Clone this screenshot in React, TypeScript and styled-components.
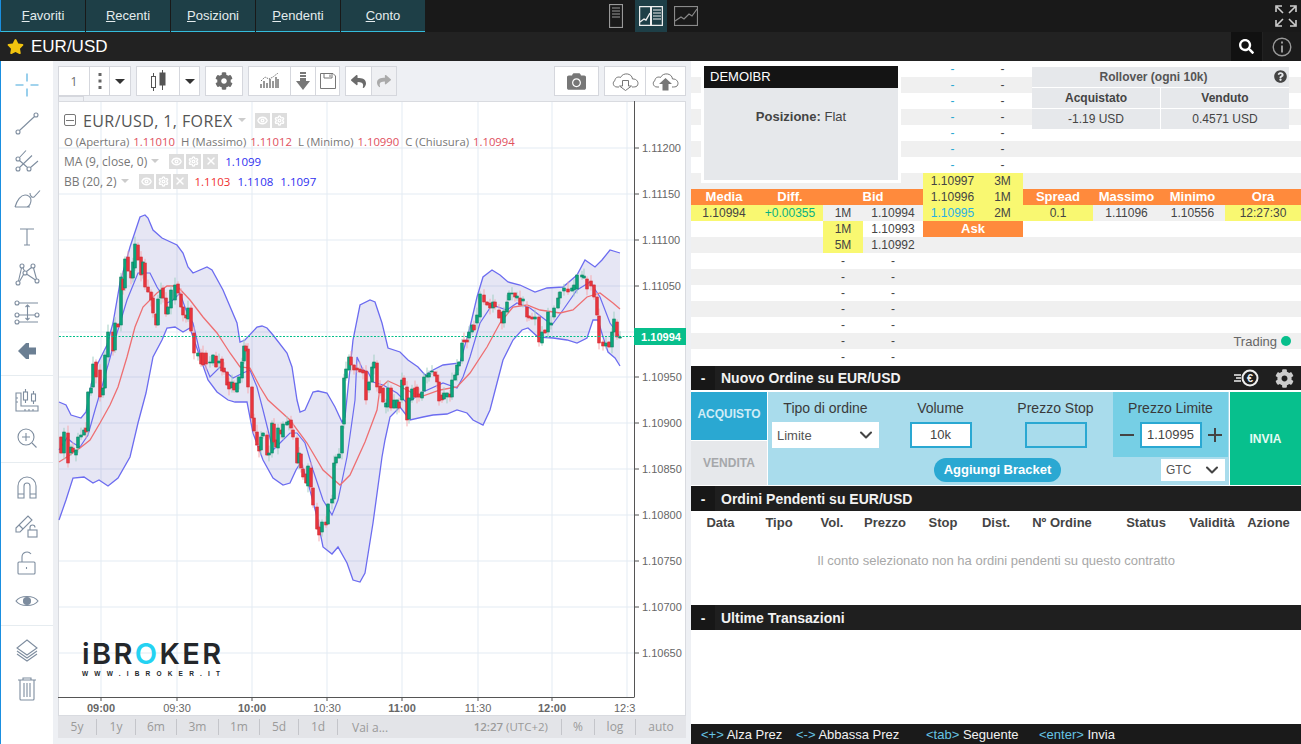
import React from "react";
import styled, { createGlobalStyle } from "styled-components";
import { ChevronDown, Eye, Settings, X } from "lucide-react";
import { FaCamera, FaCog, FaQuestionCircle, FaReply, FaSearch, FaShare, FaStar } from "react-icons/fa";

const GlobalStyle = createGlobalStyle`
  html, body {
    margin: 0;
    padding: 0;
    height: 100%;
    overflow: hidden;
    background: #fff;
    font-family: "Liberation Sans", Arial, sans-serif;
  }
  * { box-sizing: border-box; }
`;

const Page = styled.div`
  width: 1301px;
  height: 744px;
  display: flex;
  flex-direction: column;
  overflow: hidden;
`;

/* ---------- top bars ---------- */

const TopBar = styled.div`
  height: 32px;
  flex: none;
  display: flex;
  background: #191919;
  border-left: 1px solid #1a8fe0;
`;

const Tabs = styled.div`
  display: flex;
  gap: 1px;
  width: 424px;
  margin-right: 175px;
`;

const Tab = styled.div`
  flex: 1;
  display: flex;
  align-items: center;
  justify-content: center;
  background: #1e3f47;
  border-bottom: 1px solid #34bcdc;
  color: #e4ecee;
  font-size: 13px;
`;

const ViewSwitch = styled.div`
  display: flex;
  gap: 3px;
`;

const ViewButton = styled.div<{ $active?: boolean }>`
  width: 32px;
  display: flex;
  align-items: center;
  justify-content: center;
  background: ${(p) => (p.$active ? "#1e3f47" : "transparent")};
`;

const FullScreen = styled.div`
  margin-left: auto;
  margin-right: 4px;
  display: flex;
  align-items: center;
`;

const TitleBar = styled.div`
  height: 29px;
  flex: none;
  display: flex;
  align-items: center;
  background: #222;
  padding-left: 7px;
  color: #fff;
  font-size: 17px;
`;

const Title = styled.span`
  margin-left: 7px;
`;

const TitleAction = styled.div<{ $w: number; $bg: string }>`
  width: ${(p) => p.$w}px;
  height: 100%;
  display: flex;
  align-items: center;
  justify-content: center;
  background: ${(p) => p.$bg};
`;

const TitleActions = styled.div`
  margin-left: auto;
  height: 100%;
  display: flex;
  gap: 1px;
`;

/* ---------- main ---------- */

const Main = styled.div`
  flex: 1;
  display: flex;
  min-height: 0;
`;

const SideBar = styled.div`
  width: 53px;
  flex: none;
  background: #fff;
  border-left: 1px solid #1a8fe0;
`;

const SideGroup = styled.div`
  padding: 5px 0;
  border-bottom: 1px solid #e6ecf0;
  &:last-child { border-bottom: none; }
`;

const SideItem = styled.div`
  height: 38px;
  display: flex;
  align-items: center;
  justify-content: center;
  color: #7e8d9f;
  padding-right: 1px;
`;

const ChartColumn = styled.div`
  width: 638px;
  flex: none;
  background: #eef0f4;
  padding: 5px 5px 0;
  display: flex;
  flex-direction: column;
`;

const ChartToolbar = styled.div`
  height: 30px;
  flex: none;
  display: flex;
  gap: 5px;
`;

const ToolGroup = styled.div<{ $push?: boolean }>`
  display: flex;
  background: #fff;
  border: 1px solid #d5d7dd;
  margin-left: ${(p) => (p.$push ? "auto" : "0")};
`;

const ToolButton = styled.div<{ $w: number; $off?: boolean }>`
  width: ${(p) => p.$w}px;
  display: flex;
  align-items: center;
  justify-content: center;
  background: ${(p) => (p.$off ? "#eff0f3" : "#fff")};
  color: #6b6b6b;
  font-size: 12px;
  font-family: "Open Sans", sans-serif;
  & + & { border-left: 1px solid #d5d7dd; }
`;

const Caret = styled.i<{ $c?: string; $s?: number }>`
  display: inline-block;
  width: 0;
  height: 0;
  border-left: ${(p) => p.$s ?? 5}px solid transparent;
  border-right: ${(p) => p.$s ?? 5}px solid transparent;
  border-top: ${(p) => p.$s ?? 5}px solid ${(p) => p.$c ?? "#333"};
`;

const HandleRow = styled.div`
  height: 5px;
  flex: none;
`;

const Handle = styled.div`
  width: 26px;
  height: 5px;
  border: 1px solid #d5d7dd;
  border-bottom: none;
  background: #eef0f4;
`;

const ChartPanel = styled.div`
  position: relative;
  height: 615px;
  flex: none;
  background: #fff;
  box-shadow: 0 0 0 1px #d9dbe0 inset;
`;

const ChartSvg = styled.svg`
  display: block;
  width: 628px;
  height: 615px;
  font-family: "Liberation Sans", Arial, sans-serif;
`;

const Legend = styled.div`
  position: absolute;
  left: 6px;
  top: 8px;
  font-family: "Open Sans", sans-serif;
  font-size: 12px;
  color: #777;
`;

const LegendRow = styled.div<{ $h?: number; $fs?: number }>`
  height: ${(p) => p.$h ?? 20}px;
  display: flex;
  align-items: center;
  white-space: nowrap;
  font-size: ${(p) => p.$fs ?? 12}px;
`;

const LegendTitle = styled.span`
  margin: 0 5px 0 7px;
  padding-top: 1px;
  font-size: 16px;
  letter-spacing: 0.4px;
  color: #555;
`;

const Collapse = styled.span`
  width: 12px;
  height: 12px;
  border: 1px solid #777;
  border-radius: 2px;
  display: flex;
  align-items: center;
  justify-content: center;
  &::before {
    content: "";
    width: 8px;
    height: 1px;
    background: #777;
  }
`;

const LegendBtn = styled.span`
  width: 15px;
  height: 15px;
  margin-right: 2px;
  background: #ddd;
  color: #fff;
  display: flex;
  align-items: center;
  justify-content: center;
`;

const LegendVal = styled.span<{ $c: string; $ml?: number; $fs?: number }>`
  color: ${(p) => p.$c};
  margin-left: ${(p) => p.$ml ?? 4}px;
  margin-right: 2px;
  font-size: ${(p) => (p.$fs ? `${p.$fs}px` : "inherit")};
`;

const LegendLabel = styled.span<{ $ml?: number }>`
  margin-left: ${(p) => p.$ml ?? 0}px;
`;

const CaretBox = styled.span<{ $ml: number; $mr: number }>`
  display: flex;
  margin: 0 ${(p) => p.$mr}px 0 ${(p) => p.$ml}px;
`;

const Logo = styled.div`
  position: absolute;
  left: 24px;
  top: 538px;
  color: #23272b;
`;

const LogoWord = styled.div`
  font-family: "Inter", sans-serif;
  font-weight: 600;
  font-size: 29px;
  line-height: 30px;
  letter-spacing: 2.4px;
`;

const LogoO = styled.span`
  color: #24d2f2;
`;

const LogoSite = styled.div`
  font-family: "Liberation Sans", sans-serif;
  font-size: 6.5px;
  font-weight: bold;
  letter-spacing: 6.2px;
  line-height: 9px;
`;

const RangeBar = styled.div`
  height: 22px;
  flex: none;
  display: flex;
  align-items: center;
  background: #e3e4e8;
  color: #9a9a9a;
  font-size: 12px;
  font-family: "Open Sans", sans-serif;
`;

const RangeItem = styled.div<{ $w: number }>`
  width: ${(p) => p.$w}px;
  height: 16px;
  line-height: 16px;
  text-align: center;
  border-right: 1px solid #c4c5ca;
  &:last-child { border-right: none; }
`;

const RangeGoTo = styled.div`
  margin-left: 14px;
`;

const RangeTime = styled.div`
  margin-left: auto;
  padding-right: 13px;
  border-right: 1px solid #c4c5ca;
  height: 16px;
  line-height: 16px;
  font-size: 11.5px;
  b { font-weight: 600; }
`;

/* ---------- right panel ---------- */

const RightPanel = styled.div`
  flex: 1;
  min-width: 0;
  display: flex;
  flex-direction: column;
  background: #fff;
`;

const Book = styled.div`
  position: relative;
  height: 304px;
  flex: none;
`;

const BookRow = styled.div<{ $odd: boolean }>`
  height: 16px;
  display: grid;
  grid-template-columns: 66px 66px 40px 60px 59px 41px 70px 67px 65px 76px;
  background: ${(p) => (p.$odd ? "#f0f0f0" : "#fff")};
  font-size: 12px;
  color: #444;
`;

const Cell = styled.div<{ $bg?: string; $c?: string; $bold?: boolean; $col?: string }>`
  grid-column: ${(p) => p.$col ?? "auto"};
  background: ${(p) => p.$bg ?? "transparent"};
  color: ${(p) => p.$c ?? "inherit"};
  font-weight: ${(p) => (p.$bold ? "bold" : "normal")};
  font-size: ${(p) => (p.$bold ? "13px" : "12px")};
  line-height: 16px;
  text-align: center;
  white-space: nowrap;
`;

const TradingCell = styled.div`
  grid-column: 8 / 11;
  display: flex;
  align-items: center;
  justify-content: flex-end;
  padding-right: 10px;
  gap: 4px;
  font-size: 13px;
  color: #666;
`;

const Dot = styled.span`
  width: 10px;
  height: 10px;
  border-radius: 50%;
  background: #07bf8c;
`;

const AccountBox = styled.div`
  position: absolute;
  left: 10px;
  top: 2px;
  width: 200px;
  height: 120px;
  border: 3px solid #fff;
  background: #e6e8eb;
  display: flex;
  flex-direction: column;
`;

const AccountHead = styled.div`
  height: 22px;
  flex: none;
  padding-left: 6px;
  background: #141414;
  color: #fff;
  font-size: 13px;
  line-height: 22px;
`;

const AccountBody = styled.div`
  padding-top: 21px;
  text-align: center;
  font-size: 13px;
  line-height: 16px;
  color: #444;
`;

const Rollover = styled.div`
  position: absolute;
  left: 341px;
  top: 6px;
  width: 257px;
  display: grid;
  grid-template-columns: 1fr 1fr;
  gap: 1px;
  font-size: 12px;
  color: #444;
  text-align: center;
  background: #fff;
`;

const RollCell = styled.div<{ $wide?: boolean; $bold?: boolean }>`
  position: ${(p) => (p.$wide ? "relative" : "static")};
  grid-column: ${(p) => (p.$wide ? "1 / 3" : "auto")};
  height: 20px;
  line-height: 20px;
  background: #e6e8eb;
  font-weight: ${(p) => (p.$bold ? "bold" : "normal")};
`;

const RollHelp = styled.span`
  position: absolute;
  right: 2px;
  top: 3px;
  color: #444;
  display: flex;
`;

const RollTitle = styled.span`
  margin-right: 14px;
  font-weight: bold;
  color: #555;
`;

const SectionHead = styled.div<{ $h: number; $mt?: number; $mb?: number }>`
  height: ${(p) => p.$h}px;
  flex: none;
  margin-top: ${(p) => p.$mt ?? 0}px;
  margin-bottom: ${(p) => p.$mb ?? 0}px;
  display: flex;
  align-items: center;
  background: #1f1f1f;
  color: #f2f2f2;
  font-size: 14px;
  font-weight: bold;
`;

const SectionDash = styled.span`
  width: 24px;
  height: 100%;
  display: flex;
  align-items: center;
  justify-content: center;
  background: #171717;
  margin-right: 6px;
`;

const SectionTools = styled.div`
  margin-left: auto;
  display: flex;
  align-items: center;
  gap: 16px;
  padding-right: 7px;
  color: #ccc;
`;

const OrderForm = styled.div`
  height: 93px;
  flex: none;
  display: flex;
`;

const SideTabs = styled.div`
  width: 77px;
  flex: none;
  display: flex;
  flex-direction: column;
  gap: 1px;
  border-right: 1px solid #fff;
`;

const SideTab = styled.div<{ $active?: boolean }>`
  flex: 1;
  display: flex;
  align-items: center;
  justify-content: center;
  padding-bottom: ${(p) => (p.$active ? "4px" : "0")};
  font-size: 12px;
  font-weight: bold;
  background: ${(p) => (p.$active ? "#2aa8d2" : "#e6e8eb")};
  color: ${(p) => (p.$active ? "#cfecf6" : "#a5a7aa")};
`;

const FormBody = styled.div`
  width: 461px;
  flex: none;
  background: #a9dcec;
  display: flex;
  flex-direction: column;
`;

const FormFields = styled.div`
  height: 65px;
  flex: none;
  display: flex;
`;

const Field = styled.div<{ $dark?: boolean }>`
  width: 115px;
  flex: none;
  padding-top: 8px;
  display: flex;
  flex-direction: column;
  align-items: center;
  background: ${(p) => (p.$dark ? "#76cfe5" : "transparent")};
`;

const FieldLabel = styled.div`
  height: 16px;
  line-height: 16px;
  font-size: 14px;
  color: #3a3a3a;
  margin-bottom: 6px;
  white-space: nowrap;
`;

const SelectBox = styled.div<{ $w: number; $h: number; $fs?: number }>`
  width: ${(p) => p.$w}px;
  height: ${(p) => p.$h}px;
  background: #fff;
  display: flex;
  align-items: center;
  justify-content: space-between;
  padding: 0 3px 0 5px;
  font-size: ${(p) => p.$fs ?? 12}px;
  color: #555;
`;

const InputBox = styled.div<{ $empty?: boolean }>`
  width: 62px;
  height: 26px;
  border: 2px solid #2aa8d2;
  background: ${(p) => (p.$empty ? "transparent" : "#fff")};
  font-size: 13px;
  line-height: 22px;
  text-align: center;
  color: #444;
`;

const Stepper = styled.div`
  display: flex;
  align-items: center;
  gap: 6px;
`;

const StepSign = styled.span`
  width: 14px;
  height: 14px;
  position: relative;
  &::before {
    content: "";
    position: absolute;
    left: 0;
    right: 0;
    top: 6px;
    height: 2px;
    background: #444;
  }
`;

const PlusSign = styled(StepSign)`
  &::after {
    content: "";
    position: absolute;
    top: 0;
    bottom: 0;
    left: 6px;
    width: 2px;
    background: #444;
  }
`;

const FormBottom = styled.div`
  flex: 1;
  display: flex;
  align-items: center;
  padding: 0 4px 2px 166px;
  justify-content: space-between;
`;

const BracketPill = styled.div`
  width: 127px;
  height: 24px;
  border-radius: 12px;
  background: #2aa8d2;
  color: #fff;
  font-size: 13px;
  font-weight: bold;
  line-height: 24px;
  text-align: center;
`;

const SendButton = styled.div`
  flex: 1;
  margin-left: 1px;
  background: #07c08d;
  color: #e6fbf4;
  font-size: 12px;
  font-weight: bold;
  display: flex;
  align-items: center;
  justify-content: center;
`;

const PendingBody = styled.div`
  height: 94px;
  flex: none;
`;

const PendingHead = styled.div`
  height: 22px;
  display: grid;
  grid-template-columns: 59px 58px 48px 58px 58px 48px 84px 84px 48px 65px;
  align-items: center;
  font-size: 13px;
  font-weight: bold;
  color: #444;
  text-align: center;
  white-space: nowrap;
`;

const EmptyNote = styled.div`
  margin-top: 20px;
  text-align: center;
  font-size: 13px;
  line-height: 16px;
  color: #a8a8a8;
`;

const Spacer = styled.div`
  flex: 1;
`;

const KeysBar = styled.div`
  height: 20px;
  flex: none;
  display: flex;
  align-items: center;
  padding-left: 10px;
  background: #1a1a1a;
  color: #f2f2f2;
  font-size: 13px;
`;

const KeyItem = styled.span<{ $w: number }>`
  width: ${(p) => p.$w}px;
  flex: none;
  white-space: nowrap;
`;

const Key = styled.span`
  color: #66c3e4;
`;

/* ---------- chart data, all in page pixels ---------- */

const CANDLES =
  "61 437 453 r,64 432 453 g,68 433 463 r,71 447 453 g,73 448 452 r,76 450 455 g,78 437 448 g,81 435 437 g,84 430 435 g,86 428 432 r,88 392 431 g,91 388 393 g,93 364 387 g,96 362 377 r,100 370 397 r,103 388 395 g,105 355 388 g,108 332 357 g,113 332 351 r,115 323 350 g,118 324 327 r,121 277 325 g,123 279 290 r,125 259 288 g,128 257 271 r,131 271 278 r,133 262 278 g,135 244 268 g,138 245 260 r,141 257 275 r,143 262 274 g,145 263 287 r,148 287 292 r,151 292 300 r,153 298 313 r,156 314 325 r,158 299 325 g,161 290 298 g,163 288 298 r,166 298 314 r,168 307 314 g,171 290 308 g,175 285 300 g,178 284 293 r,181 294 307 r,183 307 315 r,186 315 318 r,188 308 319 g,191 308 331 r,194 333 353 r,198 353 356 g,201 353 364 r,203 353 365 r,206 353 364 r,210 362 363 g,213 355 363 g,216 356 367 r,219 361 363 g,222 359 371 r,224 368 372 r,227 372 385 r,229 382 389 r,232 382 388 g,234 383 390 r,237 383 392 g,239 377 383 g,242 362 378 g,244 346 361 g,246 346 351 r,248 349 387 r,252 387 418 r,254 418 431 r,257 432 445 r,259 446 451 r,261 437 450 g,263 433 436 g,267 435 455 r,269 453 455 g,272 423 453 g,274 424 442 r,276 440 447 r,278 428 448 g,281 430 434 r,283 424 437 g,287 422 425 g,289 421 424 g,291 420 428 r,293 430 437 r,297 438 463 r,299 453 463 g,301 454 468 r,303 469 477 r,306 474 483 r,308 466 486 g,311 468 487 r,313 488 505 r,317 507 529 r,319 527 535 r,322 522 532 g,326 522 525 r,328 504 524 g,332 499 503 g,334 463 499 g,336 457 463 g,339 454 458 g,342 426 453 g,344 378 424 g,346 369 378 g,349 357 370 g,351 357 365 r,354 365 370 r,357 368 370 r,360 369 372 r,363 370 373 r,366 371 400 r,369 382 390 g,372 367 382 g,374 362 368 g,377 363 387 r,380 386 393 r,383 388 402 r,386 403 407 g,388 388 407 g,391 388 408 r,394 400 408 g,397 400 408 g,399 402 408 r,402 380 400 g,404 378 385 r,407 387 420 r,409 398 419 g,412 389 400 g,415 388 397 r,417 387 397 r,419 394 397 r,422 392 398 g,424 377 391 g,427 375 377 g,429 373 377 g,432 371 372 g,435 372 376 r,437 375 382 r,439 382 401 r,442 395 400 r,444 393 399 g,447 393 397 g,450 394 397 r,452 380 397 g,455 375 380 g,457 365 375 g,459 362 366 g,462 343 361 g,464 340 342 r,467 340 342 r,469 332 338 g,472 325 332 g,474 325 330 r,477 315 323 g,480 294 317 g,484 295 302 r,487 302 305 r,490 303 308 r,493 302 308 g,495 302 307 r,499 310 318 r,502 312 323 r,504 311 323 g,507 302 312 g,509 293 300 g,512 293 294 g,515 293 297 r,517 296 298 g,520 298 305 r,523 299 301 g,527 307 317 r,529 316 318 r,532 317 319 r,535 317 319 g,539 317 342 r,542 332 343 g,545 330 333 r,548 312 332 g,551 323 325 g,554 308 317 g,558 298 308 g,560 292 298 g,564 288 291 g,568 289 292 r,572 288 291 g,574 285 290 g,577 275 289 g,582 275 277 g,584 276 278 g,587 279 289 r,591 281 286 r,594 285 297 r,597 297 315 r,599 316 343 r,603 342 346 r,606 343 346 g,609 342 347 r,612 332 347 g,614 319 332 g,617 322 337 r,620 337 338 g";

const UPPER = [
  [59, 402], [66, 405], [71, 415], [81, 418], [86, 412], [91, 385], [97, 365], [107, 345], [113, 323], [120, 283], [130, 247], [140, 217],
  [145, 215], [148, 218], [153, 230], [162, 238], [177, 245], [183, 253], [188, 267], [193, 273], [207, 267], [212, 270], [223, 290],
  [237, 323], [240, 342], [245, 340], [257, 327], [262, 326], [267, 328], [273, 335], [287, 353], [292, 367], [297, 400], [300, 412],
  [305, 410], [313, 392], [318, 391], [327, 393], [335, 407], [342, 422], [345, 417], [353, 340], [360, 305], [370, 300], [375, 302],
  [382, 323], [388, 348], [400, 352], [408, 360], [418, 367], [425, 375], [433, 370], [443, 365], [460, 363], [470, 327], [477, 297],
  [483, 277], [492, 270], [500, 275], [508, 282], [520, 285], [535, 292], [547, 288], [563, 287], [577, 275], [585, 260], [595, 267],
  [602, 260], [610, 250], [620, 253],
];

const LOWER = [
  [59, 520], [66, 500], [73, 478], [84, 477], [93, 483], [99, 480], [108, 486], [118, 478], [130, 457], [138, 423], [146, 393], [153, 357],
  [162, 340], [167, 328], [175, 327], [183, 332], [190, 328], [193, 337], [200, 357], [208, 380], [217, 392], [228, 400], [235, 402],
  [247, 402], [253, 433], [263, 460], [273, 478], [283, 485], [290, 483], [296, 470], [301, 462], [310, 490], [317, 517], [323, 547],
  [332, 554], [338, 547], [347, 563], [353, 580], [360, 582], [365, 573], [373, 523], [382, 457], [385, 440], [390, 417], [400, 407],
  [410, 420], [423, 417], [433, 415], [447, 414], [457, 410], [467, 413], [473, 420], [483, 425], [490, 410], [497, 383], [503, 360],
  [513, 340], [522, 330], [528, 328], [538, 337], [553, 338], [567, 340], [577, 343], [587, 338], [593, 320], [598, 320], [603, 337],
  [608, 352], [615, 358], [620, 366],
];

const BASIS = [
  [59, 462], [70, 455], [80, 448], [90, 440], [100, 423], [110, 405], [118, 387], [127, 357], [135, 327], [143, 307], [157, 293], [167, 286],
  [177, 286], [190, 300], [203, 317], [217, 333], [230, 353], [240, 367], [250, 368], [260, 387], [268, 400], [290, 420], [307, 443],
  [323, 470], [340, 485], [350, 475], [365, 442], [377, 410], [380, 388], [388, 381], [397, 385], [407, 390], [420, 397], [440, 390],
  [457, 387], [470, 373], [487, 347], [500, 323], [513, 307], [527, 305], [540, 310], [560, 313], [573, 310], [587, 297], [600, 293],
  [613, 303], [620, 309],
];

const AVERAGE = [
  [59, 450], [67, 438], [73, 443], [80, 447], [88, 435], [95, 410], [103, 383], [117, 333], [127, 300], [138, 273], [150, 273], [157, 287],
  [167, 303], [173, 300], [180, 293], [187, 313], [193, 323], [200, 353], [210, 377], [220, 367], [233, 378], [243, 373], [250, 370],
  [257, 387], [263, 410], [268, 430], [273, 450], [280, 443], [290, 433], [297, 433], [305, 443], [313, 470], [323, 500], [332, 515],
  [338, 500], [347, 457], [355, 400], [357, 357], [363, 370], [368, 372], [373, 382], [383, 385], [397, 393], [407, 403], [423, 392],
  [443, 383], [457, 388], [463, 377], [470, 357], [480, 323], [492, 305], [507, 310], [517, 303], [530, 308], [543, 318], [552, 325],
  [563, 310], [577, 290], [590, 282], [600, 297], [610, 323], [620, 337],
];

const toPoints = (pts: number[][]) => pts.map((p) => p.join(",")).join(" ");

const PRICE_LABELS = [
  ["1.11200", 148], ["1.11150", 194], ["1.11100", 240], ["1.11050", 286], ["1.11000", 332], ["1.10950", 377],
  ["1.10900", 423], ["1.10850", 469], ["1.10800", 515], ["1.10750", 561], ["1.10700", 607], ["1.10650", 653],
] as const;

const TIME_LABELS = [
  ["09:00", 101], ["09:30", 177], ["10:00", 252], ["10:30", 327], ["11:00", 402], ["11:30", 478], ["12:00", 552],
] as const;

const GRID = "#e3ebf3";
const BAND = "#6c6cf0";

const Chart = () => {
  const candles = CANDLES.split(",").map((row, i) => {
    const [x, top, bottom, side] = row.split(" ");
    return { x: Number(x), top: Number(top), bottom: Number(bottom), up: side === "g", i };
  });

  return (
    <ChartSvg viewBox="58 101 628 615">
      {PRICE_LABELS.map(([, y]) => (
        <line key={y} x1="59" x2="634" y1={y} y2={y} stroke={GRID} />
      ))}
      {TIME_LABELS.map(([, x]) => (
        <line key={x} x1={x} x2={x} y1="102" y2="697" stroke={GRID} />
      ))}
      <line x1="627" x2="627" y1="102" y2="697" stroke={GRID} />

      <polygon points={toPoints([...UPPER, ...[...LOWER].reverse()])} fill="rgba(105,105,190,0.17)" />
      <polyline points={toPoints(AVERAGE)} fill="none" stroke={BAND} strokeWidth="1.2" />
      <polyline points={toPoints(BASIS)} fill="none" stroke="#ee6f72" strokeWidth="1.3" />
      <polyline points={toPoints(UPPER)} fill="none" stroke={BAND} strokeWidth="1.3" />
      <polyline points={toPoints(LOWER)} fill="none" stroke={BAND} strokeWidth="1.3" />

      {candles.map((c) => (
        <line
          key={`w${c.i}`}
          x1={c.x}
          x2={c.x}
          y1={c.top - ((c.i * 7) % 5) * 1.6 - 1}
          y2={c.bottom + ((c.i * 3) % 4) * 1.8 + 1}
          stroke={c.up ? "#a3cfc4" : "#f5aab0"}
        />
      ))}
      {candles.map((c) => (
        <rect
          key={`b${c.i}`}
          x={c.x - 1.3}
          y={c.top}
          width="2.6"
          height={Math.max(c.bottom - c.top, 1)}
          fill={c.up ? "#0aa57b" : "#e8343c"}
          stroke={c.up ? "#0a7f61" : "#cc2f37"}
          strokeWidth="0.6"
        />
      ))}

      <line x1="59" x2="634" y1="336.5" y2="336.5" stroke="#00bf8a" strokeDasharray="2 1.5" />

      <line x1="634.5" x2="634.5" y1="101" y2="697" stroke="#555" />
      <line x1="58" x2="634.5" y1="697.5" y2="697.5" stroke="#555" />

      {PRICE_LABELS.map(([label, y]) => (
        <g key={label}>
          <line x1="635" x2="639" y1={y} y2={y} stroke="#555" />
          <text x="642" y={y + 4} fontSize="11" fill="#666">
            {label}
          </text>
        </g>
      ))}
      {TIME_LABELS.map(([label, x]) => (
        <g key={label}>
          <line x1={x} x2={x} y1="697" y2="701" stroke="#555" />
          <text x={x} y="712" fontSize="11" fill="#666" textAnchor="middle" fontWeight={label.endsWith("00") ? "bold" : "normal"}>
            {label}
          </text>
        </g>
      ))}
      <text x="614" y="712" fontSize="11" fill="#666">
        12:3
      </text>

      <rect x="634" y="328" width="52" height="17" fill="#07bf8c" />
      <text x="661" y="341" fontSize="11" fontWeight="bold" fill="#fff" textAnchor="middle">
        1.10994
      </text>
    </ChartSvg>
  );
};

/* ---------- icons ---------- */

const Line = styled.svg`
  display: block;
  fill: none;
  stroke: currentColor;
  stroke-width: 1.1;
`;

const Tool = ({ children }: { children: React.ReactNode }) => (
  <Line width="28" height="28" viewBox="0 0 28 28">
    {children}
  </Line>
);

const SideIcons: React.ReactNode[][] = [
  [
    <Line key="cross" width="28" height="28" viewBox="0 0 28 28" style={{ color: "#45a8dc" }}>
      <path d="M14 2.5v8M14 17.5v8M2.5 14h8M17.5 14h8" />
    </Line>,
    <Tool key="line">
      <circle cx="5" cy="23" r="2" />
      <circle cx="23" cy="6" r="2" />
      <path d="M6.5 21.5L21.5 7.5" />
    </Tool>,
    <Tool key="fork">
      <circle cx="5" cy="12" r="2" />
      <circle cx="5" cy="22" r="2" />
      <circle cx="16" cy="22" r="2" />
      <path d="M6.5 10.5L13 3.5M6.5 20.5L19 8.5M17.5 20.5L25 14M6.5 13.5L14.5 20.5" />
    </Tool>,
    <Tool key="brush">
      <path d="M2 22h15M2 22C4 15 8 10 12 10C15 10 18 12 18 15C18 18 17 20.5 14 22" />
      <path d="M17 8C17 11 19 13 21 12L27 5.5" />
    </Tool>,
    <Tool key="text">
      <path d="M7 6h14M14 6v16M11 22h6" />
    </Tool>,
    <Tool key="nodes">
      <circle cx="5" cy="22" r="2" />
      <circle cx="9" cy="5" r="2" />
      <circle cx="12" cy="12" r="2" />
      <circle cx="20" cy="5" r="2" />
      <circle cx="24" cy="20" r="2" />
      <path d="M5.5 20L8.5 7M10 7L11.5 10M13.5 10.5L18.5 6.5M20.5 7L23.5 18M6.5 20.5L10.5 13.5M13.5 13L22.5 19" />
    </Tool>,
    <Tool key="levels">
      <circle cx="4" cy="4" r="2" />
      <circle cx="4" cy="16" r="2" />
      <circle cx="4" cy="23" r="2" />
      <circle cx="24" cy="16" r="2" />
      <path d="M6 4h19M6 16h16M6 23h19M14.5 6v15M12.5 8l2-2 2 2M12.5 19l2 2 2-2" />
    </Tool>,
    <svg key="back" width="18" height="16" viewBox="0 0 18 16" fill="#6b7f93">
      <path d="M0 8L8 0H11V4.5H18V11.5H11V16H8Z" />
    </svg>,
  ],
  [
    <Tool key="ruler">
      <path d="M3 7V25H25V20H8V7Z" />
      <path d="M12 25v-2M16 25v-2M20 25v-2M3 16h2M3 12h2" />
      <rect x="10.5" y="6" width="4" height="8" />
      <path d="M12.5 3v3M12.5 14v3" />
      <rect x="18.5" y="8" width="4" height="7" />
      <path d="M20.5 5v3M20.5 15v3" />
    </Tool>,
    <Tool key="zoom">
      <circle cx="13" cy="13" r="8" />
      <path d="M19 19l4.5 4.5M13 9v8M9 13h8" />
    </Tool>,
  ],
  [
    <Tool key="magnet">
      <path d="M5 25V13a9 9 0 0 1 18 0V25H17V13a3 3 0 0 0-6 0V25ZM5 21h6M17 21h6" />
    </Tool>,
    <Tool key="pencil">
      <path d="M3 17L15 5L19 9L7 21L3 21Z" />
      <path d="M6 14L10 18" />
      <rect x="15" y="19" width="9" height="7" />
      <path d="M17 19v-2.5a2.5 2.5 0 0 1 5 0" />
    </Tool>,
    <Tool key="lock">
      <rect x="5" y="13" width="17" height="12" rx="1" />
      <path d="M9 13V8a5 5 0 0 1 9-3" />
      <path d="M13.5 18v2" />
    </Tool>,
    <Tool key="eye">
      <path d="M3 14C7 8 21 8 25 14C21 20 7 20 3 14Z" />
      <circle cx="14" cy="14" r="3.5" fill="currentColor" />
    </Tool>,
  ],
  [
    <Tool key="layers">
      <path d="M14 4L24 12L14 19L4 12Z" />
      <path d="M4 15L14 22L24 15M4 18L14 25L24 18" />
    </Tool>,
    <Tool key="trash">
      <path d="M5 6h18M10 6V4h8v2M7 6v19a1 1 0 0 0 1 1h12a1 1 0 0 0 1-1V6M11 9v14M14 9v14M17 9v14" />
    </Tool>,
  ],
];

const BookIcon = () => (
  <svg width="14" height="24" viewBox="0 0 14 24" fill="none" stroke="#999">
    <rect x="0.5" y="0.5" width="13" height="23" strokeWidth="1.2" />
    <path d="M3 4h8M3 7h8M3 10h8M3 13h8" />
  </svg>
);

const SplitIcon = () => (
  <svg width="24" height="20" viewBox="0 0 24 20" fill="none" stroke="#eee">
    <rect x="0.5" y="0.5" width="23" height="19" strokeWidth="1.5" />
    <path d="M12 0v20" strokeWidth="2" />
    <path d="M1 16l4-3 2 1 4-7" strokeWidth="1.4" />
    <path d="M14 4h8M14 7h8M14 10h8M14 13h8" />
  </svg>
);

const LineChartIcon = () => (
  <svg width="24" height="20" viewBox="0 0 24 20" fill="none" stroke="#8a8a8a">
    <rect x="0.5" y="0.5" width="23" height="19" strokeWidth="1.2" />
    <path d="M1 15l6-4 3 2 5-5 3 2 5-7" strokeWidth="1.2" />
  </svg>
);

const FullScreenIcon = () => (
  <svg width="22" height="22" viewBox="0 0 22 22" fill="none" stroke="#ccc" strokeWidth="1.6">
    <path d="M1 7V1h6M2 2l6 6M21 7V1h-6M20 2l-6 6M1 15v6h6M2 20l6-6M21 15v6h-6M20 20l-6-6" />
  </svg>
);

const InfoIcon = () => (
  <svg width="20" height="20" viewBox="0 0 20 20" fill="none" stroke="#999" strokeWidth="1.4">
    <circle cx="10" cy="10" r="8.8" />
    <path d="M10 8.5v7M10 4.5v2" strokeWidth="2" />
  </svg>
);

const CandleIcon = () => (
  <svg width="16" height="26" viewBox="0 0 16 26" fill="none" stroke="#555">
    <rect x="1.5" y="8.5" width="4" height="11" />
    <path d="M3.5 5v3M3.5 20v3" />
    <rect x="10" y="5" width="5" height="12" fill="#555" />
    <path d="M12.5 2v3M12.5 17v5" />
  </svg>
);

const DotsIcon = () => (
  <svg width="4" height="16" viewBox="0 0 4 16" fill="#666">
    <rect width="3" height="3" x="0.5" y="0" />
    <rect width="3" height="3" x="0.5" y="6.5" />
    <rect width="3" height="3" x="0.5" y="13" />
  </svg>
);

const BarsIcon = () => (
  <svg width="19" height="16" viewBox="0 0 19 16" fill="none" stroke="#777">
    <path d="M1 15v-4M4 15v-7M7 15v-5M10 15V6M13 15V8M16 15V4M18 15V6" strokeWidth="1.5" />
    <path d="M1 8l4-4 4 2 4-2 5-4" strokeDasharray="1.5 1" />
  </svg>
);

const LoadIcon = () => (
  <svg width="14" height="18" viewBox="0 0 14 18" fill="#777">
    <path d="M4 0h6v2H4zM4 3h6v2H4zM4 6h6v3h4L7 18L0 9h4z" />
  </svg>
);

const SaveIcon = () => (
  <svg width="16" height="16" viewBox="0 0 16 16" fill="none" stroke="#777">
    <path d="M0.5 0.5H13L15.5 3V15.5H0.5Z" />
    <path d="M4 .5V5H12V.5M10 1.5V4" />
  </svg>
);

const CloudIcon = ({ up }: { up?: boolean }) => (
  <svg width="27" height="19" viewBox="0 0 27 19" fill="none" stroke="#777">
    <path d="M7 15H5C1 15 0 10 3 8.5C3 5 7 4.5 8.5 5.5C11 0 20 1 20.5 7C25 6.5 27.5 11 25 14C24 15 22 15 20 15" />
    {up ? <path d="M13.5 6L20 12H16.5V18.5H10.5V12H7Z" fill="#777" stroke="none" /> : <path d="M10.5 8.5H16.5V14H19.5L13.5 18.5L7.5 14H10.5Z" fill="#fff" />}
  </svg>
);

const EuroSpeedIcon = () => (
  <svg width="25" height="18" viewBox="0 0 25 18" fill="none" stroke="#eee">
    <circle cx="16" cy="9" r="7.5" strokeWidth="2" />
    <path d="M0 6h7M2 9h5M0 12h7" strokeWidth="1.6" />
    <text x="16" y="13" fontSize="11" fontWeight="bold" textAnchor="middle" fill="#eee" stroke="none">
      €
    </text>
  </svg>
);

/* ---------- right side data ---------- */

const YELLOW = "#f9f871";
const ORANGE = "#ff8a3c";

const BookRows = () => {
  const rows: React.ReactNode[] = [];

  for (let i = 0; i < 19; i++) {
    let cells: React.ReactNode = null;
    if (i < 7) {
      cells = (
        <>
          <Cell $col="5" $c="#2aa8d2">-</Cell>
          <Cell $col="6">-</Cell>
        </>
      );
    } else if (i === 7) {
      cells = (
        <>
          <Cell $col="5" $bg={YELLOW}>1.10997</Cell>
          <Cell $col="6" $bg={YELLOW}>3M</Cell>
        </>
      );
    } else if (i === 8) {
      cells = (
        <>
          <Cell $bg={ORANGE} $c="#fff" $bold>Media</Cell>
          <Cell $bg={ORANGE} $c="#fff" $bold>Diff.</Cell>
          <Cell $col="3 / 5" $bg={ORANGE} $c="#fff" $bold>Bid</Cell>
          <Cell $bg={YELLOW}>1.10996</Cell>
          <Cell $bg={YELLOW}>1M</Cell>
          <Cell $bg={ORANGE} $c="#fff" $bold>Spread</Cell>
          <Cell $bg={ORANGE} $c="#fff" $bold>Massimo</Cell>
          <Cell $bg={ORANGE} $c="#fff" $bold>Minimo</Cell>
          <Cell $bg={ORANGE} $c="#fff" $bold>Ora</Cell>
        </>
      );
    } else if (i === 9) {
      cells = (
        <>
          <Cell $bg={YELLOW}>1.10994</Cell>
          <Cell $bg={YELLOW} $c="#07b083">+0.00355</Cell>
          <Cell>1M</Cell>
          <Cell>1.10994</Cell>
          <Cell $bg={YELLOW} $c="#2ab0e5">1.10995</Cell>
          <Cell $bg={YELLOW}>2M</Cell>
          <Cell $bg={YELLOW}>0.1</Cell>
          <Cell>1.11096</Cell>
          <Cell>1.10556</Cell>
          <Cell $bg={YELLOW}>12:27:30</Cell>
        </>
      );
    } else if (i === 10) {
      cells = (
        <>
          <Cell $col="3" $bg={YELLOW}>1M</Cell>
          <Cell>1.10993</Cell>
          <Cell $col="5 / 7" $bg={ORANGE} $c="#fff" $bold>Ask</Cell>
        </>
      );
    } else if (i === 11) {
      cells = (
        <>
          <Cell $col="3" $bg={YELLOW}>5M</Cell>
          <Cell>1.10992</Cell>
        </>
      );
    } else {
      cells = (
        <>
          <Cell $col="3">-</Cell>
          <Cell>-</Cell>
          {i === 17 && (
            <TradingCell>
              Trading <Dot />
            </TradingCell>
          )}
        </>
      );
    }
    rows.push(
      <BookRow key={i} $odd={i % 2 === 1}>
        {cells}
      </BookRow>
    );
  }

  return <>{rows}</>;
};

const Section = ({ title, h, mt, mb, children }: { title: string; h: number; mt?: number; mb?: number; children?: React.ReactNode }) => (
  <SectionHead $h={h} $mt={mt} $mb={mb}>
    <SectionDash>-</SectionDash>
    {title}
    {children && <SectionTools>{children}</SectionTools>}
  </SectionHead>
);

const PENDING_COLUMNS = ["Data", "Tipo", "Vol.", "Prezzo", "Stop", "Dist.", "Nº Ordine", "Status", "Validità", "Azione"];

const App = () => {
  return (
    <Page>
      <GlobalStyle />
      <TopBar>
        <Tabs>
          {["Favoriti", "Recenti", "Posizioni", "Pendenti", "Conto"].map((name) => (
            <Tab key={name}>
              <span>
                <u>{name[0]}</u>
                {name.slice(1)}
              </span>
            </Tab>
          ))}
        </Tabs>
        <ViewSwitch>
          <ViewButton><BookIcon /></ViewButton>
          <ViewButton $active><SplitIcon /></ViewButton>
          <ViewButton><LineChartIcon /></ViewButton>
        </ViewSwitch>
        <FullScreen><FullScreenIcon /></FullScreen>
      </TopBar>

      <TitleBar>
        <FaStar size={17} color="#f2c40f" />
        <Title>EUR/USD</Title>
        <TitleActions>
          <TitleAction $w={31} $bg="#111"><FaSearch size={15} color="#fff" /></TitleAction>
          <TitleAction $w={38} $bg="#1b1b1b"><InfoIcon /></TitleAction>
        </TitleActions>
      </TitleBar>

      <Main>
        <SideBar>
          {SideIcons.map((group, g) => (
            <SideGroup key={g}>
              {group.map((icon, i) => (
                <SideItem key={i}>{icon}</SideItem>
              ))}
            </SideGroup>
          ))}
        </SideBar>

        <ChartColumn>
          <ChartToolbar>
            <ToolGroup>
              <ToolButton $w={30}>1</ToolButton>
              <ToolButton $w={20}><DotsIcon /></ToolButton>
              <ToolButton $w={21}><Caret /></ToolButton>
            </ToolGroup>
            <ToolGroup>
              <ToolButton $w={42}><CandleIcon /></ToolButton>
              <ToolButton $w={20}><Caret /></ToolButton>
            </ToolGroup>
            <ToolGroup>
              <ToolButton $w={36}><FaCog size={18} /></ToolButton>
            </ToolGroup>
            <ToolGroup>
              <ToolButton $w={41}><BarsIcon /></ToolButton>
              <ToolButton $w={25}><LoadIcon /></ToolButton>
              <ToolButton $w={24}><SaveIcon /></ToolButton>
            </ToolGroup>
            <ToolGroup>
              <ToolButton $w={25}><FaReply size={15} /></ToolButton>
              <ToolButton $w={25} $off><FaShare size={14} color="#aaa" /></ToolButton>
            </ToolGroup>
            <ToolGroup $push>
              <ToolButton $w={43}><FaCamera size={19} color="#777" /></ToolButton>
            </ToolGroup>
            <ToolGroup>
              <ToolButton $w={40}><CloudIcon /></ToolButton>
              <ToolButton $w={40}><CloudIcon up /></ToolButton>
            </ToolGroup>
          </ChartToolbar>
          <HandleRow><Handle /></HandleRow>

          <ChartPanel>
            <Chart />
            <Legend>
              <LegendRow $h={22}>
                <Collapse />
                <LegendTitle>EUR/USD, 1, FOREX</LegendTitle>
                <CaretBox $ml={0} $mr={9}><Caret $c="#ccc" $s={4} /></CaretBox>
                <LegendBtn><Eye size={11} strokeWidth={3} /></LegendBtn>
                <LegendBtn><Settings size={11} strokeWidth={3} /></LegendBtn>
              </LegendRow>
              <LegendRow $fs={11.3}>
                <LegendLabel>O (Apertura)</LegendLabel>
                <LegendVal $c="#e0505e">1.11010</LegendVal>
                <LegendLabel $ml={4}>H (Massimo)</LegendLabel>
                <LegendVal $c="#e0505e">1.11012</LegendVal>
                <LegendLabel $ml={4}>L (Minimo)</LegendLabel>
                <LegendVal $c="#e0505e">1.10990</LegendVal>
                <LegendLabel $ml={4}>C (Chiusura)</LegendLabel>
                <LegendVal $c="#e0505e">1.10994</LegendVal>
              </LegendRow>
              <LegendRow>
                <LegendLabel>MA (9, close, 0)</LegendLabel>
                <CaretBox $ml={4} $mr={10}><Caret $c="#ccc" $s={4} /></CaretBox>
                <LegendBtn><Eye size={11} strokeWidth={3} /></LegendBtn>
                <LegendBtn><Settings size={11} strokeWidth={3} /></LegendBtn>
                <LegendBtn><X size={12} strokeWidth={3} /></LegendBtn>
                <LegendVal $c="#2f2ff0" $ml={5} $fs={11.5}>1.1099</LegendVal>
              </LegendRow>
              <LegendRow>
                <LegendLabel>BB (20, 2)</LegendLabel>
                <CaretBox $ml={4} $mr={10}><Caret $c="#ccc" $s={4} /></CaretBox>
                <LegendBtn><Eye size={11} strokeWidth={3} /></LegendBtn>
                <LegendBtn><Settings size={11} strokeWidth={3} /></LegendBtn>
                <LegendBtn><X size={12} strokeWidth={3} /></LegendBtn>
                <LegendVal $c="#f03030" $ml={5} $fs={11.5}>1.1103</LegendVal>
                <LegendVal $c="#2f2ff0" $ml={5} $fs={11.5}>1.1108</LegendVal>
                <LegendVal $c="#2f2ff0" $ml={5} $fs={11.5}>1.1097</LegendVal>
              </LegendRow>
            </Legend>
            <Logo>
              <LogoWord>
                iBR<LogoO>O</LogoO>KER
              </LogoWord>
              <LogoSite>WWW.IBROKER.IT</LogoSite>
            </Logo>
          </ChartPanel>

          <RangeBar>
            {[["5y", 39], ["1y", 39], ["6m", 41], ["3m", 42], ["1m", 41], ["5d", 39], ["1d", 39]].map(([label, w]) => (
              <RangeItem key={label} $w={Number(w)}>{label}</RangeItem>
            ))}
            <RangeGoTo>Vai a...</RangeGoTo>
            <RangeTime>
              <b>12:27</b> (UTC+2)
            </RangeTime>
            <RangeItem $w={33}>%</RangeItem>
            <RangeItem $w={41}>log</RangeItem>
            <RangeItem $w={50}>auto</RangeItem>
          </RangeBar>
        </ChartColumn>

        <RightPanel>
          <Book>
            <BookRows />
            <AccountBox>
              <AccountHead>DEMOIBR</AccountHead>
              <AccountBody>
                <b>Posizione:</b> Flat
              </AccountBody>
            </AccountBox>
            <Rollover>
              <RollCell $wide>
                <RollTitle>Rollover (ogni 10k)</RollTitle>
                <RollHelp><FaQuestionCircle size={13} /></RollHelp>
              </RollCell>
              <RollCell $bold>Acquistato</RollCell>
              <RollCell $bold>Venduto</RollCell>
              <RollCell>-1.19 USD</RollCell>
              <RollCell>0.4571 USD</RollCell>
            </Rollover>
          </Book>

          <Section title="Nuovo Ordine su EUR/USD" h={24} mt={1} mb={2}>
            <EuroSpeedIcon />
            <FaCog size={19} />
          </Section>

          <OrderForm>
            <SideTabs>
              <SideTab $active>ACQUISTO</SideTab>
              <SideTab>VENDITA</SideTab>
            </SideTabs>
            <FormBody>
              <FormFields>
                <Field>
                  <FieldLabel>Tipo di ordine</FieldLabel>
                  <SelectBox $w={107} $h={26} $fs={13}>
                    Limite <ChevronDown size={20} strokeWidth={2.5} color="#444" />
                  </SelectBox>
                </Field>
                <Field>
                  <FieldLabel>Volume</FieldLabel>
                  <InputBox>10k</InputBox>
                </Field>
                <Field>
                  <FieldLabel>Prezzo Stop</FieldLabel>
                  <InputBox $empty />
                </Field>
                <Field $dark>
                  <FieldLabel>Prezzo Limite</FieldLabel>
                  <Stepper>
                    <StepSign />
                    <InputBox>1.10995</InputBox>
                    <PlusSign />
                  </Stepper>
                </Field>
              </FormFields>
              <FormBottom>
                <BracketPill>Aggiungi Bracket</BracketPill>
                <SelectBox $w={64} $h={22}>
                  GTC <ChevronDown size={20} strokeWidth={2.5} color="#444" />
                </SelectBox>
              </FormBottom>
            </FormBody>
            <SendButton>INVIA</SendButton>
          </OrderForm>

          <Section title="Ordini Pendenti su EUR/USD" h={25} mt={1} />
          <PendingBody>
            <PendingHead>
              {PENDING_COLUMNS.map((name) => (
                <div key={name}>{name}</div>
              ))}
            </PendingHead>
            <EmptyNote>Il conto selezionato non ha ordini pendenti su questo contratto</EmptyNote>
          </PendingBody>

          <Section title="Ultime Transazioni" h={25} />
          <Spacer />

          <KeysBar>
            <KeyItem $w={95}><Key>&lt;+&gt;</Key> Alza Prez</KeyItem>
            <KeyItem $w={130}><Key>&lt;-&gt;</Key> Abbassa Prez</KeyItem>
            <KeyItem $w={113}><Key>&lt;tab&gt;</Key> Seguente</KeyItem>
            <KeyItem $w={80}><Key>&lt;enter&gt;</Key> Invia</KeyItem>
          </KeysBar>
        </RightPanel>
      </Main>
    </Page>
  );
};

export default App;
